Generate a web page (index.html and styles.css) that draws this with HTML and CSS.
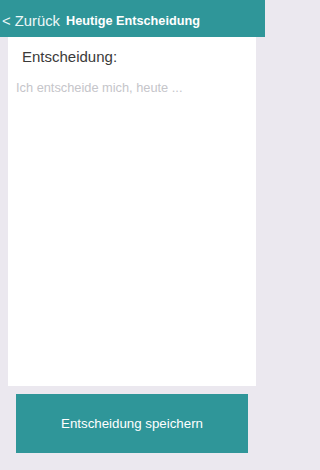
FILE: index.html
```html
<!DOCTYPE html>
<html lang="de">
<head>
<meta charset="utf-8">
<link rel="stylesheet" href="styles.css">
</head>
<body>
<div class="screen">
  <header class="navbar">
    <span class="back">&lt; Zurück</span>
    <span class="title">Heutige Entscheidung</span>
  </header>
  <main class="card">
    <div class="label">Entscheidung:</div>
    <div class="placeholder">Ich entscheide mich, heute ...</div>
  </main>
  <button class="save">Entscheidung speichern</button>
</div>
</body>
</html>
```
FILE: styles.css
```css
html, body {
  margin: 0;
  padding: 0;
  background: #ebe8ef;
}
.screen {
  width: 265px;
  height: 470px;
  display: flex;
  flex-direction: column;
  font-family: "Liberation Sans", Arial, sans-serif;
}
.navbar {
  height: 37px;
  box-sizing: border-box;
  padding: 5px 0 0 2px;
  background: #2f9699;
  display: flex;
  align-items: center;
  gap: 6px;
  color: #fff;
}
.back {
  font-size: 14.8px;
  color: #eef8f8;
}
.title {
  font-size: 12.7px;
  font-weight: bold;
}
.card {
  height: 349px;
  margin: 0 9px 0 8px;
  background: #fff;
  box-sizing: border-box;
  padding-top: 11px;
}
.label {
  font-size: 15px;
  line-height: 18px;
  color: #3a3a3a;
  padding-left: 14px;
}
.placeholder {
  margin-top: 14px;
  font-size: 12.8px;
  line-height: 16px;
  color: #c5c5ca;
  padding-left: 8px;
}
.save {
  margin: 8px 17px 0 16px;
  height: 59px;
  border: none;
  background: #2f9699;
  color: #fff;
  font-family: "Liberation Sans", Arial, sans-serif;
  font-size: 13.3px;
  padding: 0;
}
```
